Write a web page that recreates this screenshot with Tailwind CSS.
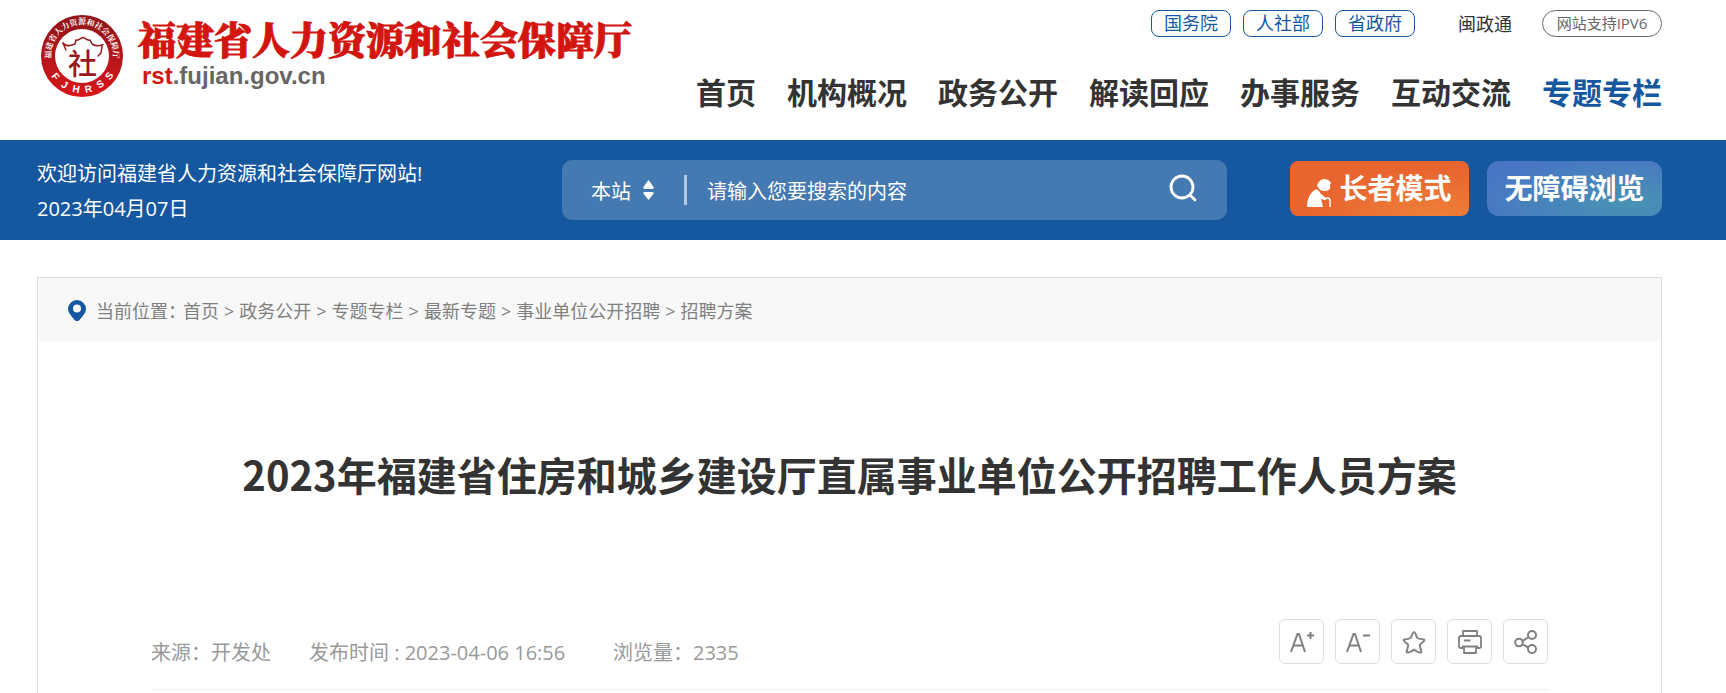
<!DOCTYPE html>
<html lang="zh-CN">
<head>
  <meta charset="UTF-8"/>
  <title>福建省人力资源和社会保障厅</title>
  <script src="https://cdn.jsdelivr.net/npm/@tailwindcss/browser@4"></script>
</head>
<body class="flex flex-col min-h-screen bg-white text-[#333] font-['Open_Sans','Noto_Sans_CJK_SC',sans-serif] overflow-x-hidden">

  <!-- Header -->
  <header class="flex justify-between h-[140px] pl-10 pr-16">
    <a href="#" class="flex items-start gap-[14px] pt-[15px]">
      <svg class="w-[84px] h-[82px] shrink-0" viewBox="-1 0 84 82" aria-label="FJHRSS">
        <defs>
          <linearGradient id="ring" x1="0" y1="0" x2="0" y2="1">
            <stop offset="0" stop-color="#8f1519"/>
            <stop offset="1" stop-color="#d9161a"/>
          </linearGradient>
          <path id="arc" d="M10.5 46 A31 31 0 1 1 71.5 46"/>
        </defs>
        <circle cx="41" cy="41" r="41" fill="url(#ring)"/>
        <circle cx="41" cy="41" r="27" fill="#fff"/>
        <text font-size="8" font-weight="700" fill="#fff" font-family="Noto Serif CJK SC, Noto Sans CJK SC"><textPath href="#arc" startOffset="50%" text-anchor="middle">福建省人力资源和社会保障厅</textPath></text>
        <g font-size="10" font-weight="700" fill="#fff" text-anchor="middle" font-family="Liberation Sans">
          <text x="41" y="78" transform="rotate(52 41 41)">F</text>
          <text x="41" y="78" transform="rotate(31 41 41)">J</text>
          <text x="41" y="78" transform="rotate(10 41 41)">H</text>
          <text x="41" y="78" transform="rotate(-11 41 41)">R</text>
          <text x="41" y="78" transform="rotate(-33 41 41)">S</text>
          <text x="41" y="78" transform="rotate(-54 41 41)">S</text>
        </g>
        <!-- roof -->
        <g fill="none" stroke="#96191c" stroke-width="1.5" stroke-linecap="round" stroke-linejoin="round">
          <path d="M22 28 C24 31 28 31.500 34 29 L35 25 C38 26 40 22.500 42 22.500 C44 22.500 46 26 49 25 L51 29 C55 31.500 59 31 62 29.500"/>
          <path d="M22 28 L25 35 M61 31 L60 38 L57 41"/>
        </g>
        <text x="41.500" y="60" font-size="29" font-weight="500" fill="#96191c" text-anchor="middle" font-family="Noto Sans CJK SC">社</text>
      </svg>
      <span class="flex flex-col">
        <span class="text-[38px] leading-[46px] font-black text-[#d2160f] [-webkit-text-stroke:1px_#d2160f] whitespace-nowrap font-['Noto_Serif_CJK_SC','Noto_Sans_CJK_SC',serif]">福建省人力资源和社会保障厅</span>
        <span class="pl-1 text-2xl leading-[30px] font-bold text-[#666] font-['Liberation_Sans',sans-serif]"><span class="text-[#d2160f]">rst</span>.fujian.gov.cn</span>
      </span>
    </a>

    <div class="flex flex-col items-end whitespace-nowrap">
      <div class="flex items-center pt-[10px] text-lg text-[#1558a0]">
        <div class="flex gap-3">
          <a href="#" class="w-20 h-[27px] leading-6 text-center border border-[#1558a0] rounded-lg">国务院</a>
          <a href="#" class="w-20 h-[27px] leading-6 text-center border border-[#1558a0] rounded-lg">人社部</a>
          <a href="#" class="w-20 h-[27px] leading-6 text-center border border-[#1558a0] rounded-lg">省政府</a>
        </div>
        <a href="#" class="ml-[43px] leading-6 text-[#333]">闽政通</a>
        <a href="#" class="ml-[30px] w-[120px] h-[27px] leading-6 text-center text-[15px] text-[#666] border border-[#666] rounded-full">网站支持IPV6</a>
      </div>
      <nav class="flex gap-[31px] mt-[34px] text-3xl leading-[44px] font-bold">
        <a href="#">首页</a>
        <a href="#">机构概况</a>
        <a href="#">政务公开</a>
        <a href="#">解读回应</a>
        <a href="#">办事服务</a>
        <a href="#">互动交流</a>
        <a href="#" class="text-[#1558a0]">专题专栏</a>
      </nav>
    </div>
  </header>

  <!-- Search bar -->
  <section class="flex items-center h-[100px] pl-[37px] pr-16 bg-[#16589f] text-white text-xl whitespace-nowrap">
    <div class="w-[525px] shrink-0 pt-[2px] leading-[35px]">
      <p>欢迎访问福建省人力资源和社会保障厅网站!</p>
      <p>2023年04月07日</p>
    </div>
    <form class="flex flex-1 items-center h-[60px] pl-[29px] pr-[30px] rounded-[10px] bg-white/20">
      <label class="flex items-center gap-3">
        <select aria-label="搜索范围" class="appearance-none w-10 pt-1 bg-transparent outline-none">
          <option>本站</option>
        </select>
        <svg class="w-[11px] h-5" viewBox="0 0 11 20" fill="#fff"><path d="M5.500 0 Q8 3 11 8 Q10 9 9 9 H2 Q1 9 0 8 Q3 3 5.500 0Z M5.500 20 Q8 17 11 13 Q10 12 9 12 H2 Q1 12 0 13 Q3 17 5.500 20Z"/></svg>
      </label>
      <span class="ml-[30px] w-[3px] h-[30px] bg-white/60"></span>
      <input type="text" aria-label="搜索" placeholder="请输入您要搜索的内容" class="ml-5 pt-1 flex-1 min-w-0 bg-transparent outline-none placeholder:text-white"/>
      <button type="button" aria-label="搜索">
        <svg class="w-7 h-7 -mt-1" viewBox="0 0 28 28" fill="none" stroke="#fff" stroke-width="2.800" stroke-linecap="round"><circle cx="13" cy="13" r="11"/><path d="M21 21 L26 26"/></svg>
      </button>
    </form>
    <div class="flex gap-[18px] ml-[63px] pb-[3px] text-[28px] font-bold">
      <button type="button" class="flex items-center justify-center gap-2 w-[179px] h-[55px] rounded-lg bg-[radial-gradient(ellipse_at_80%_100%,#ee8039,#e8652f_60%)]">
        <svg class="w-6 h-7 mt-2" viewBox="0 0 24 28" fill="#fff"><path d="M10 7 Q11 1 17 0 Q22 0 24 4 L23 6 Q24 12 18 12 Q12 12 11 8Z M0 28 Q0 15 9 10 Q12 11 14 15 L19 19 L18 21 L14 20 Q15 24 16 28Z"/><path d="M18.500 21 Q18 19 20.500 19 Q23 19 23 22 V28" fill="none" stroke="#fff" stroke-width="1.500"/></svg>
        长者模式
      </button>
      <button type="button" class="w-[175px] h-[55px] rounded-xl bg-[radial-gradient(ellipse_at_80%_75%,#4893b3,#4876c4_80%)]">无障碍浏览</button>
    </div>
  </section>

  <!-- Article -->
  <main class="flex-1 mt-[37px] ml-[37px] mr-16 border border-b-0 border-[#ddd]">
    <nav class="flex items-center h-[63px] pt-[2px] pl-[30px] bg-[#f8f8f8] text-lg text-[#808080] whitespace-nowrap">
      <svg class="w-[18px] h-[21px] mr-[10px]" viewBox="0 0 18 21" fill="#1558a0"><path fill-rule="evenodd" d="M9 0 A9 9 0 0 1 18 9 C18 13 13 18 11 20.500 Q9 21.500 7 20.500 C5 18 0 13 0 9 A9 9 0 0 1 9 0Z M9 4.500 A4 4 0 1 0 9 12.500 A4 4 0 1 0 9 4.500Z"/></svg>
      <span class="w-[87px]">当前位置：</span>
      <ol class="flex gap-[5px]">
        <li><a href="#">首页</a></li>
        <li>&gt;</li>
        <li><a href="#">政务公开</a></li>
        <li>&gt;</li>
        <li><a href="#">专题专栏</a></li>
        <li>&gt;</li>
        <li><a href="#">最新专题</a></li>
        <li>&gt;</li>
        <li><a href="#">事业单位公开招聘</a></li>
        <li>&gt;</li>
        <li><a href="#">招聘方案</a></li>
      </ol>
    </nav>

    <article class="px-[113px]">
      <h1 class="pt-[103px] text-center text-[40px] leading-[60px] font-bold font-['Noto_Sans_CJK_SC',sans-serif]">2023年福建省住房和城乡建设厅直属事业单位公开招聘工作人员方案</h1>

      <div class="flex items-start justify-between mt-[115px] h-[71px] border-b border-[#eee]">
        <div class="flex gap-[38px] pt-[18px] text-xl leading-8 text-[#999] whitespace-nowrap">
          <span>来源：开发处</span>
          <span class="w-[266px]">发布时间 : 2023-04-06 16:56</span>
          <span>浏览量：2335</span>
        </div>
        <div class="flex gap-[11px] text-[#808080]">
          <button type="button" aria-label="放大字号" class="flex items-center justify-center w-[45px] h-[45px] border border-[#ddd] rounded-md">
            <svg class="w-6 h-6" viewBox="0 0 24 24" fill="none" stroke="currentColor" stroke-width="2"><path d="M1 22 L7.500 4 H9 L15 22 M4 15.500 H12.500 M17 5.500 H24 M20.500 2 V9"/></svg>
          </button>
          <button type="button" aria-label="缩小字号" class="flex items-center justify-center w-[45px] h-[45px] border border-[#ddd] rounded-md">
            <svg class="w-6 h-6" viewBox="0 0 24 24" fill="none" stroke="currentColor" stroke-width="2"><path d="M1 22 L7.500 4 H9 L15 22 M4 15.500 H12.500 M17 5.500 H24"/></svg>
          </button>
          <button type="button" aria-label="收藏" class="flex items-center justify-center w-[45px] h-[45px] border border-[#ddd] rounded-md">
            <svg class="w-6 h-6" viewBox="0 0 24 24" fill="none" stroke="currentColor" stroke-width="2" stroke-linejoin="round"><path d="M12 2 Q13 2 15 7.500 Q16 9 22 9.500 Q23.500 10.500 18 14.500 Q17.500 15.500 19.500 22 Q18 24 12 19.500 Q6 24 4.500 22 Q6.500 15.500 6 14.500 Q.500 10.500 2 9.500 Q8 9 9 7.500 Q11 2 12 2Z"/></svg>
          </button>
          <button type="button" aria-label="打印" class="flex items-center justify-center w-[45px] h-[45px] border border-[#ddd] rounded-md">
            <svg class="w-6 h-6" viewBox="0 0 24 24" fill="none" stroke="currentColor" stroke-width="1.800" stroke-linejoin="round"><path d="M5 6 V1 H19 V6 M5 18 H3 Q1 18 1 16.500 V8 Q1 6 3 6 H21 Q23 6 23 8 V16.500 Q23 18 21 18 H19 M4 16.500 H20 M6 16.500 V23 H18 V16.500 M6 10.500 H12.500"/></svg>
          </button>
          <button type="button" aria-label="分享" class="flex items-center justify-center w-[45px] h-[45px] border border-[#ddd] rounded-md">
            <svg class="w-6 h-6" viewBox="0 0 24 24" fill="none" stroke="currentColor" stroke-width="2"><circle cx="5" cy="12.500" r="3.800"/><circle cx="18" cy="5" r="4"/><circle cx="18" cy="19" r="4"/><path d="M8.500 10.800 L14.300 7.500 M8.500 14.300 L14.300 17.500"/></svg>
          </button>
        </div>
      </div>
    </article>
  </main>

</body>
</html>
